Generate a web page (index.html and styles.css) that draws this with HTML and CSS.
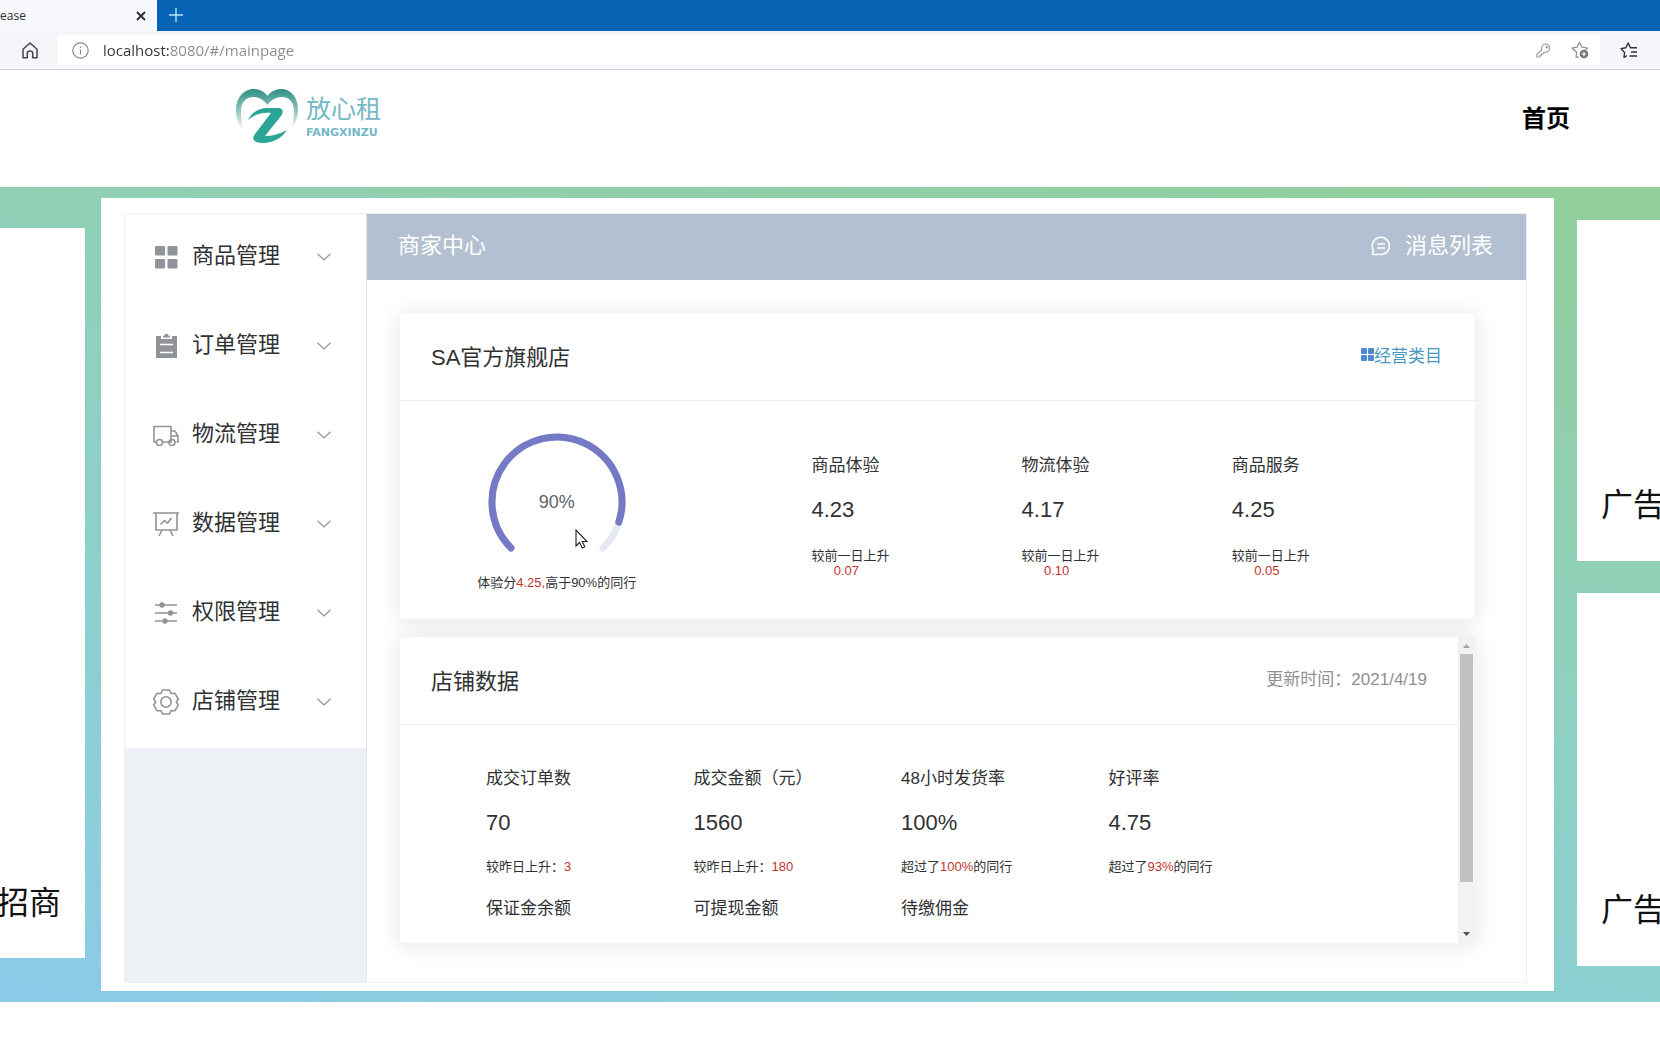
FILE: index.html
```html
<!DOCTYPE html>
<html lang="zh-CN">
<head>
<meta charset="utf-8">
<title>lease</title>
<link rel="stylesheet" href="styles.css">
</head>
<body>
<div class="browser">
  <div class="tabs">
    <div class="tab"><span class="tab-title">ease</span>
      <button class="tab-close" aria-label="关闭标签页"><svg width="10" height="10" viewBox="0 0 10 10"><path d="M1 1l8 8M9 1l-8 8" stroke="#2b2b2b" stroke-width="1.8"/></svg></button>
    </div>
    <button class="tab-new" aria-label="新建标签页"><svg width="14" height="14" viewBox="0 0 14 14"><path d="M7 0v14M0 7h14" stroke="#bfe6f5" stroke-width="1.3"/></svg></button>
  </div>
  <div class="toolbar">
    <button class="tool home" aria-label="主页"><svg width="16" height="17" viewBox="0 0 16 17" fill="none" stroke="#444" stroke-width="1.5" stroke-linejoin="round"><path d="M1 7.2L8 1l7 6.2V15.800h-4.300V11c0-1.200-.9-2-2.700-2s-2.700.8-2.700 2v4.800H1z"/></svg></button>
    <div class="address">
      <svg width="17" height="17" viewBox="0 0 17 17" fill="none" stroke="#8a8a8a" stroke-width="1.200"><circle cx="8.500" cy="8.500" r="7.700"/><path d="M8.500 7.500v5M8.500 4.500v1.500"/></svg>
      <input class="url" type="text" aria-label="地址" value="localhost:8080/#/mainpage">
      <button class="tool" aria-label="密码"><svg width="15" height="15" viewBox="0 0 15 15" fill="none" stroke="#a2a2a2" stroke-width="1.200" stroke-linejoin="round"><path d="M9.800 1a4.200 4.200 0 0 0-4 5.500L.8 11.500V14h3v-1.500h1.500V11h1.400l1.500-1.800A4.200 4.200 0 1 0 9.800 1z"/><circle cx="10.800" cy="4.200" r=".7"/></svg></button>
      <button class="tool" aria-label="收藏"><svg width="18" height="18" viewBox="0 0 18 18" fill="none" stroke="#8c8c8c" stroke-width="1.200" stroke-linejoin="round"><path d="M8 16l-3 .2.600-5L1 7l5-.8L8.500 1.300 11 6.200l5.500.8-2 2"/><circle cx="13" cy="13" r="4.300" fill="#747474" stroke="none"/><path d="M13 10.800v4.400M10.800 13h4.400" stroke="#fff"/></svg></button>
    </div>
    <button class="tool favs" aria-label="收藏夹"><svg width="18" height="17" viewBox="0 0 18 17" fill="none" stroke="#333" stroke-width="1.400" stroke-linejoin="round"><path d="M7 13.500L4 15.500l.6-5L1 6.600l4.800-.8L8.200 1l2.200 4.800H17M11 10h6M9.500 14H17"/></svg></button>
  </div>
</div>

<header class="site-header">
  <a class="logo" href="#/mainpage">
    <svg width="64" height="56" viewBox="0 0 64 56">
      <defs><linearGradient id="heart" x1="0" y1="0" x2="0" y2="1"><stop offset="0" stop-color="#2f8f82"/><stop offset=".5" stop-color="#8cc4bd"/><stop offset="1" stop-color="#fff"/></linearGradient></defs>
      <path d="M8.500 43C2.500 36 1 29 1 22 1 9 9 1 19 1c6 0 10.500 3 13.500 7C35.500 4 40 1 46 1c10 0 17 8 17 21 0 8-3 14-7 19 2-6 3-12 3-18C59 14 54 9 47 9c-7 0-12 4-14.500 8C29 12 24 9 18.500 9 11 9 6 14 6 23c0 7 .5 13 2.500 20z" fill="url(#heart)"/>
      <path d="M13 32c4-8 12-12.500 20-12h10c5 0 6 3.500 3 8L30 48c8 0 14-2 22-6-5 8-14 13-24 13-9 0-12-4-8-9l16-21c-8-1-16 1-23 7z" fill="#2ba595"/>
    </svg>
    <span class="logo-words"><span class="logo-cn">放心租</span><span class="logo-en">FANGXINZU</span></span>
  </a>
  <a class="home-link" href="#/">首页</a>
</header>

<div class="stage">
  <aside class="ad ad-left"><span>招商</span></aside>
  <main class="panel">
    <div class="shell">
      <nav class="side">
        <button class="item"><svg class="ico" viewBox="0 0 26 26" fill="#909399"><rect x="2" y="2" width="10" height="9.500" rx="1"/><rect x="14.500" y="2" width="10" height="9.500" rx="1"/><rect x="2" y="15" width="10" height="9.500" rx="1"/><rect x="14.500" y="15" width="10" height="9.500" rx="1"/></svg><span>商品管理</span><svg class="chev" viewBox="0 0 14 8"><path d="M.5.7L7 7 13.500.7"/></svg></button>
        <button class="item"><svg class="ico" viewBox="0 0 26 26" fill="#909399"><path d="M3 3h5v3h11V3h5v22H3z"/><path d="M10 2.500h2V1h3v1.500h2v2h-7z"/><path d="M7 11.500h13M7 19.500h13" stroke="#fff" stroke-width="1.500"/></svg><span>订单管理</span><svg class="chev" viewBox="0 0 14 8"><path d="M.5.7L7 7 13.500.7"/></svg></button>
        <button class="item"><svg class="ico line" viewBox="0 0 26 26"><path d="M3.500 20H1V4.500h17V20H10M18 9h4l3 5v6h-1.500M18 14h7"/><circle cx="6.500" cy="20.500" r="3"/><circle cx="19" cy="20.500" r="3"/></svg><span>物流管理</span><svg class="chev" viewBox="0 0 14 8"><path d="M.5.7L7 7 13.500.7"/></svg></button>
        <button class="item"><svg class="ico line" viewBox="0 0 26 26"><path d="M0 2h26M3 2v17h21V2M9 19l-3 6M17 19l3 6M7.500 13.500l4-4 3 2.500 4-5"/></svg><span>数据管理</span><svg class="chev" viewBox="0 0 14 8"><path d="M.5.7L7 7 13.500.7"/></svg></button>
        <button class="item"><svg class="ico line" viewBox="0 0 26 26"><path d="M2 5h22M2 13h22M2 21h22"/><g fill="#909399" stroke="none"><circle cx="9" cy="5" r="2.700"/><circle cx="17.500" cy="13" r="2.700"/><circle cx="12" cy="21" r="2.700"/></g></svg><span>权限管理</span><svg class="chev" viewBox="0 0 14 8"><path d="M.5.7L7 7 13.500.7"/></svg></button>
        <button class="item"><svg class="ico line" viewBox="0 0 26 26"><path d="M9.500 1h7l1.500 3.500 4-.2 3.300 5.700-2 3 2 3-3.300 5.700-4-.2-1.500 3.500h-7L8 21.500l-4 .2L.7 16l2-3-2-3L4 4.300l4 .2z" stroke-linejoin="round"/><circle cx="13" cy="13" r="5.200"/></svg><span>店铺管理</span><svg class="chev" viewBox="0 0 14 8"><path d="M.5.7L7 7 13.500.7"/></svg></button>
      </nav>
      <div class="content">
        <div class="bar">
          <h1>商家中心</h1>
          <a class="messages" href="#/messages"><svg width="20" height="20" viewBox="0 0 20 20" fill="none" stroke="#fff" stroke-width="1.600"><path d="M1.300 18.500l1-4.500A8.600 8.600 0 1 1 10 18.500zM6 8h8M6 12h8" stroke-linejoin="round"/></svg>消息列表</a>
        </div>
        <div class="cards">
          <section class="card">
            <div class="card-head"><h2>SA官方旗舰店</h2><a class="category" href="#/category"><svg width="13" height="13" viewBox="0 0 13 13" fill="#4c8bd0"><rect width="6" height="6" rx="1"/><rect x="7" width="6" height="6" rx="1"/><rect y="7" width="6" height="6" rx="1"/><rect x="7" y="7" width="6" height="6" rx="1"/></svg>经营类目</a></div>
            <div class="score">
              <div class="gauge-box">
                <div class="gauge">
                  <svg width="138" height="138" viewBox="0 0 138 138" fill="none" stroke-width="7" stroke-linecap="round"><path d="M23 115A65 65 0 1 1 115 115" stroke="#e5e9f2"/><path d="M23 115A65 65 0 1 1 130.800 89.100" stroke="#757ac4"/></svg>
                  <span class="gauge-text">90%</span>
                  <svg class="pointer" width="13" height="20" viewBox="0 0 13 20"><path d="M1 1v16l3.500-3.500 2.800 5.500 2.500-1.200L7.200 12.500H12z" fill="#fff" stroke="#222" stroke-width="1.100"/></svg>
                </div>
                <p class="note">体验分<em>4.25,</em>高于90%的同行</p>
              </div>
              <div class="metric"><h3>商品体验</h3><b>4.23</b><p>较前一日上升<em>0.07</em></p></div>
              <div class="metric"><h3>物流体验</h3><b>4.17</b><p>较前一日上升<em>0.10</em></p></div>
              <div class="metric"><h3>商品服务</h3><b>4.25</b><p>较前一日上升<em>0.05</em></p></div>
            </div>
          </section>
          <section class="card scroll-card">
            <div class="scroll-body">
              <div class="card-head"><h2>店铺数据</h2><span class="updated">更新时间：2021/4/19</span></div>
              <div class="stats">
                <div class="stat"><h3>成交订单数</h3><b>70</b><p class="note">较昨日上升：<em>3</em></p></div>
                <div class="stat"><h3>成交金额（元）</h3><b>1560</b><p class="note">较昨日上升：<em>180</em></p></div>
                <div class="stat"><h3>48小时发货率</h3><b>100%</b><p class="note">超过了<em>100%</em>的同行</p></div>
                <div class="stat"><h3>好评率</h3><b>4.75</b><p class="note">超过了<em>93%</em>的同行</p></div>
                <div class="stat"><h3>保证金余额</h3></div>
                <div class="stat"><h3>可提现金额</h3></div>
                <div class="stat"><h3>待缴佣金</h3></div>
              </div>
            </div>
            <div class="scrollbar">
              <svg width="17" height="17" viewBox="0 0 17 17"><path d="M5 11l3.500-4L12 11z" fill="#a3a3a3"/></svg>
              <div class="track"><div class="thumb"></div></div>
              <svg width="17" height="17" viewBox="0 0 17 17"><path d="M5 6l3.500 4L12 6z" fill="#505050"/></svg>
            </div>
          </section>
        </div>
      </div>
    </div>
  </main>
  <div class="ads-right">
    <aside class="ad ad-top"><span>广告</span></aside>
    <aside class="ad ad-bottom"><span>广告</span></aside>
  </div>
</div>
</body>
</html>
```
FILE: styles.css
```css
* { box-sizing: border-box; }
body {
  margin: 0;
  background: #fff;
  color: #303133;
  font-family: "Liberation Sans", "Noto Sans CJK SC", sans-serif;
  overflow-x: hidden;
}
button { border: 0; padding: 0; background: none; font: inherit; color: inherit; }
h1, h2, h3, p { margin: 0; font-weight: 400; }
a { text-decoration: none; color: inherit; }
em { font-style: normal; color: #c0342f; }
svg { display: block; flex: none; }

/* browser chrome */
.tabs { display: flex; height: 31px; background: #0763b3; }
.tab {
  display: flex; align-items: center; justify-content: space-between;
  width: 157px; padding-right: 11px; background: #f7f8fb;
  font: 12px/30px "Open Sans", sans-serif;
}
.tab-new { margin: 0 0 2px 12px; }
.toolbar {
  display: flex; align-items: center; height: 39px;
  background: #f6f6fa; border-bottom: 1px solid #d4d4d6;
}
.home { margin: 0 20px 0 22px; }
.address {
  display: flex; align-items: center; flex: 1; gap: 20px;
  height: 30px; padding: 0 11px 0 14px; background: #fff;
}
.url {
  flex: 1; margin-left: -6px; padding: 0; border: 0; outline: 0;
  font: 15px/24px "Open Sans", sans-serif;
  color: transparent;
  background: linear-gradient(90deg, #333 66px, #8a8a8a 66px);
  -webkit-background-clip: text; background-clip: text;
}
.favs { margin: 0 22px 0 20px; }

/* site header */
.site-header {
  display: flex; align-items: flex-start; justify-content: space-between;
  height: 117px; padding: 18px 90px 0 235px;
}
.logo { display: flex; gap: 7px; }
.logo-words { display: flex; flex-direction: column; padding-top: 7px; color: #74b9c6; }
.logo-cn { font-size: 25px; line-height: 28px; }
.logo-en { font: bold 11px/20px "DejaVu Sans", sans-serif; }
.home-link { padding-top: 13px; font-size: 24px; line-height: 36px; font-weight: 700; color: #000; }

/* page body */
.stage {
  display: grid; grid-template-columns: 85px minmax(0, 1fr) 83px;
  padding: 11px 0;
  background: linear-gradient(193deg, #93cf9a, #8ed0c4 50%, #8bcfda 82%, #8ccae8);
}
.ad {
  display: flex; align-items: flex-end; overflow: hidden;
  background: #fff; color: #111; font-size: 32px; line-height: 48px; white-space: nowrap;
}
.ad-left { justify-content: flex-end; margin: 30px 0 33px; padding: 0 24px 31px 0; }
.ads-right { display: grid; grid-template-rows: 341fr 372fr; gap: 32px; margin: 22px 0 25px; }
.ad-top, .ad-bottom { padding: 0 0 32px 24px; }
.panel { margin: 0 23px 0 16px; padding: 15px 27px 8px 23px; background: #fff; }

.shell { display: flex; border: 1px solid #eee; }
.side { width: 242px; background: #edf0f5; border-right: 1px solid #e6e6e6; }
.item {
  display: flex; align-items: center; width: 100%; height: 89px;
  padding: 0 35px 3px 28px; background: #fff; font-size: 22px; line-height: 28px; text-align: left;
}
.item span { flex: 1; padding: 0 0 3px 13px; }
.ico { width: 26px; height: 26px; }
.line, .chev { fill: none; stroke: #909399; stroke-width: 1.600; }
.chev { width: 14px; height: 8px; stroke-width: 1.200; }

.content { flex: 1; min-width: 0; }
.bar {
  display: flex; justify-content: space-between; height: 66px;
  padding: 0 33px 0 31px; background: #b3c0d1; color: #fff; line-height: 64px;
}
.bar h1, .messages { font-size: 22px; }
.messages { display: flex; align-items: center; gap: 14px; height: 64px; }

.cards { display: grid; gap: 16px; padding: 32px 50px 38px 32px; }
.card {
  height: 308px; border: 1px solid #f0f1f5; border-radius: 4px;
  background: #fff; box-shadow: 0 2px 24px rgba(0, 0, 0, .1);
}
.card-head {
  display: flex; justify-content: space-between;
  height: 88px; padding: 0 33px 0 31px; border-bottom: 1px solid #ebeef5;
}
.card-head h2 { font-size: 22px; line-height: 90px; }
.category { display: flex; align-items: center; height: 82px; font-size: 17px; color: #4a98bf; }
.updated { margin-right: -2px; font-size: 17px; line-height: 86px; color: #909090; }

.score { display: grid; grid-template-columns: 411fr 210fr 210fr 210fr; padding: 32px 33px 0 0; }
.gauge-box { display: flex; flex-direction: column; align-items: center; padding-right: 98px; }
.gauge { position: relative; width: 138px; height: 138px; }
.gauge-text {
  position: absolute; inset: 0; font-size: 18px; line-height: 138px;
  text-align: center; color: #606266;
}
.pointer { position: absolute; left: 87px; top: 96px; }
.note { font-size: 13px; line-height: 24px; }
.metric { padding-top: 21px; }
.metric h3, .stat h3 { font-size: 17px; line-height: 24px; }
.metric b, .stat b { display: block; font-weight: 400; font-size: 22px; line-height: 64px; }
.metric p { width: min-content; padding-top: 6px; font-size: 13px; line-height: 15px; text-align: center; white-space: nowrap; }
.metric em { display: block; padding-right: 8px; }

.scroll-card { display: flex; overflow: hidden; }
.scroll-body { flex: 1; min-width: 0; overflow: hidden; }
.stats { display: grid; grid-template-columns: repeat(4, 1fr); row-gap: 18px; padding: 42px 142px 0 86px; }
.scrollbar { display: flex; flex-direction: column; width: 17px; background: #f3f2f3; }
.track { flex: 1; padding: 0 2px; }
.thumb { height: 84%; background: #c1c1c1; }
```
